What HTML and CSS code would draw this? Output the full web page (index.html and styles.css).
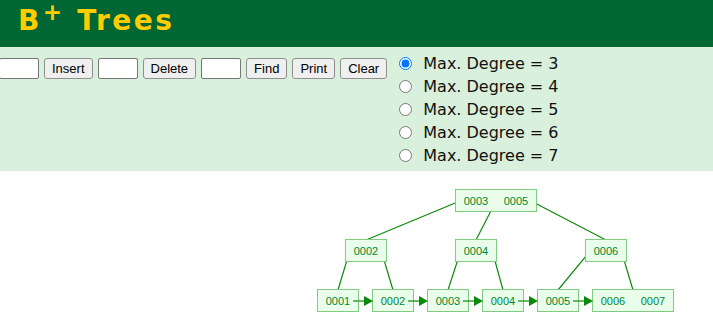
FILE: index.html
```html
<!doctype html>
<html lang="en-us">
	<head>
		<meta charset="utf-8">
		<title>B+ Trees</title>
		<link rel="stylesheet" href="styles.css">
	</head>
	<body>
		<div id="head">
			<h1>B<sup>+</sup> Trees</h1>
		</div>
		<div id="controls">
			<div class="ops">
				<input type="text" class="field first">
				<button>Insert</button>
				<input type="text" class="field">
				<button>Delete</button>
				<input type="text" class="field">
				<button>Find</button>
				<button>Print</button>
				<button>Clear</button>
			</div>
			<div class="degrees">
				<label class="degree"><input type="radio" name="degree" checked> Max. Degree = 3</label>
				<label class="degree"><input type="radio" name="degree"> Max. Degree = 4</label>
				<label class="degree"><input type="radio" name="degree"> Max. Degree = 5</label>
				<label class="degree"><input type="radio" name="degree"> Max. Degree = 6</label>
				<label class="degree"><input type="radio" name="degree"> Max. Degree = 7</label>
			</div>
		</div>
		<svg id="canvas" width="713" height="162" viewBox="0 171 713 162">
			<g class="edges">
				<line x1="460" y1="201" x2="366" y2="240"/>
				<line x1="496" y1="201" x2="476" y2="240"/>
				<line x1="531" y1="201" x2="606" y2="240"/>
				<line x1="350" y1="250" x2="338" y2="290"/>
				<line x1="381" y1="250" x2="393" y2="290"/>
				<line x1="461" y1="250" x2="448" y2="290"/>
				<line x1="492" y1="250" x2="503" y2="290"/>
				<line x1="591" y1="250" x2="558" y2="290"/>
				<line x1="621" y1="250" x2="633" y2="290"/>
			</g>
			<g class="nodes">
				<rect x="455.5" y="189.5" width="81" height="22"/>
				<rect x="345.5" y="239.5" width="41" height="22"/>
				<rect x="455.5" y="239.5" width="41" height="22"/>
				<rect x="585.5" y="239.5" width="41" height="22"/>
				<rect x="317.5" y="289.5" width="41" height="22"/>
				<rect x="372.5" y="289.5" width="41" height="22"/>
				<rect x="427.5" y="289.5" width="41" height="22"/>
				<rect x="482.5" y="289.5" width="41" height="22"/>
				<rect x="537.5" y="289.5" width="41" height="22"/>
				<rect x="592.5" y="289.5" width="81" height="22"/>
			</g>
			<g class="links">
				<line x1="353" y1="301" x2="365" y2="301"/>
				<polygon points="364,296 364,306 373,301"/>
				<line x1="408" y1="301" x2="420" y2="301"/>
				<polygon points="419,296 419,306 428,301"/>
				<line x1="463" y1="301" x2="475" y2="301"/>
				<polygon points="474,296 474,306 483,301"/>
				<line x1="518" y1="301" x2="530" y2="301"/>
				<polygon points="529,296 529,306 538,301"/>
				<line x1="573" y1="301" x2="585" y2="301"/>
				<polygon points="584,296 584,306 593,301"/>
			</g>
			<g class="keys">
				<text x="476" y="201">0003</text>
				<text x="516" y="201">0005</text>
				<text x="366" y="251">0002</text>
				<text x="476" y="251">0004</text>
				<text x="606" y="251">0006</text>
				<text x="338" y="301">0001</text>
				<text x="393" y="301">0002</text>
				<text x="448" y="301">0003</text>
				<text x="503" y="301">0004</text>
				<text x="558" y="301">0005</text>
				<text x="613" y="301">0006</text>
				<text x="653" y="301">0007</text>
			</g>
		</svg>
	</body>
</html>
```
FILE: styles.css
```css
html, body {
	margin: 0;
	background-color: #fff;
	font-family: "DejaVu Sans", Verdana, sans-serif;
	overflow: hidden;
}
#head {
	background-color: #006633;
	height: 47px;
	padding-left: 18px;
}
h1 {
	color: #ffcc00;
	margin: 0;
	padding-top: 2px;
	font-size: 28px;
	line-height: 38px;
	letter-spacing: 2.5px;
}
h1 sup {
	line-height: 0;
	font-size: 23px;
	letter-spacing: 0;
	margin-left: 1px;
	margin-right: 3px;
}
#controls {
	background-color: #d9f0dc;
	height: 124px;
	display: flex;
	align-items: flex-start;
}
.ops {
	display: flex;
	gap: 5px;
	margin-top: 11px;
}
.field {
	width: 40px;
	height: 21px;
	box-sizing: border-box;
	margin: 0;
	border: 1px solid #767676;
	border-radius: 2px;
	background: #fff;
	padding: 0 2px;
}
.field.first {
	margin-left: -1px;
}
button {
	height: 21px;
	margin: 0;
	padding: 0 7px;
	font-family: "Liberation Sans", Arial, sans-serif;
	font-size: 13px;
	color: #000;
	background-color: #efefef;
	border: 1px solid #8f8f8f;
	border-radius: 3px;
}
.degrees {
	display: flex;
	flex-direction: column;
	margin-left: 12px;
	margin-top: 5px;
}
.degree {
	height: 23px;
	display: flex;
	align-items: center;
	font-size: 16px;
	color: #111;
	white-space: pre;
}
.degree input {
	width: 13px;
	height: 13px;
	margin: 0 6px 0 0;
}
#canvas {
	display: block;
}
.edges line, .links line {
	stroke: #0a8a0a;
	stroke-width: 1.2;
}
.links polygon {
	fill: #0a8a0a;
}
.nodes rect {
	fill: #eafdea;
	stroke: #80cc80;
	stroke-width: 1;
}
.keys text {
	font-family: "Liberation Sans", Arial, sans-serif;
	font-size: 11px;
	fill: #00872f;
	text-anchor: middle;
	dominant-baseline: central;
}
```
